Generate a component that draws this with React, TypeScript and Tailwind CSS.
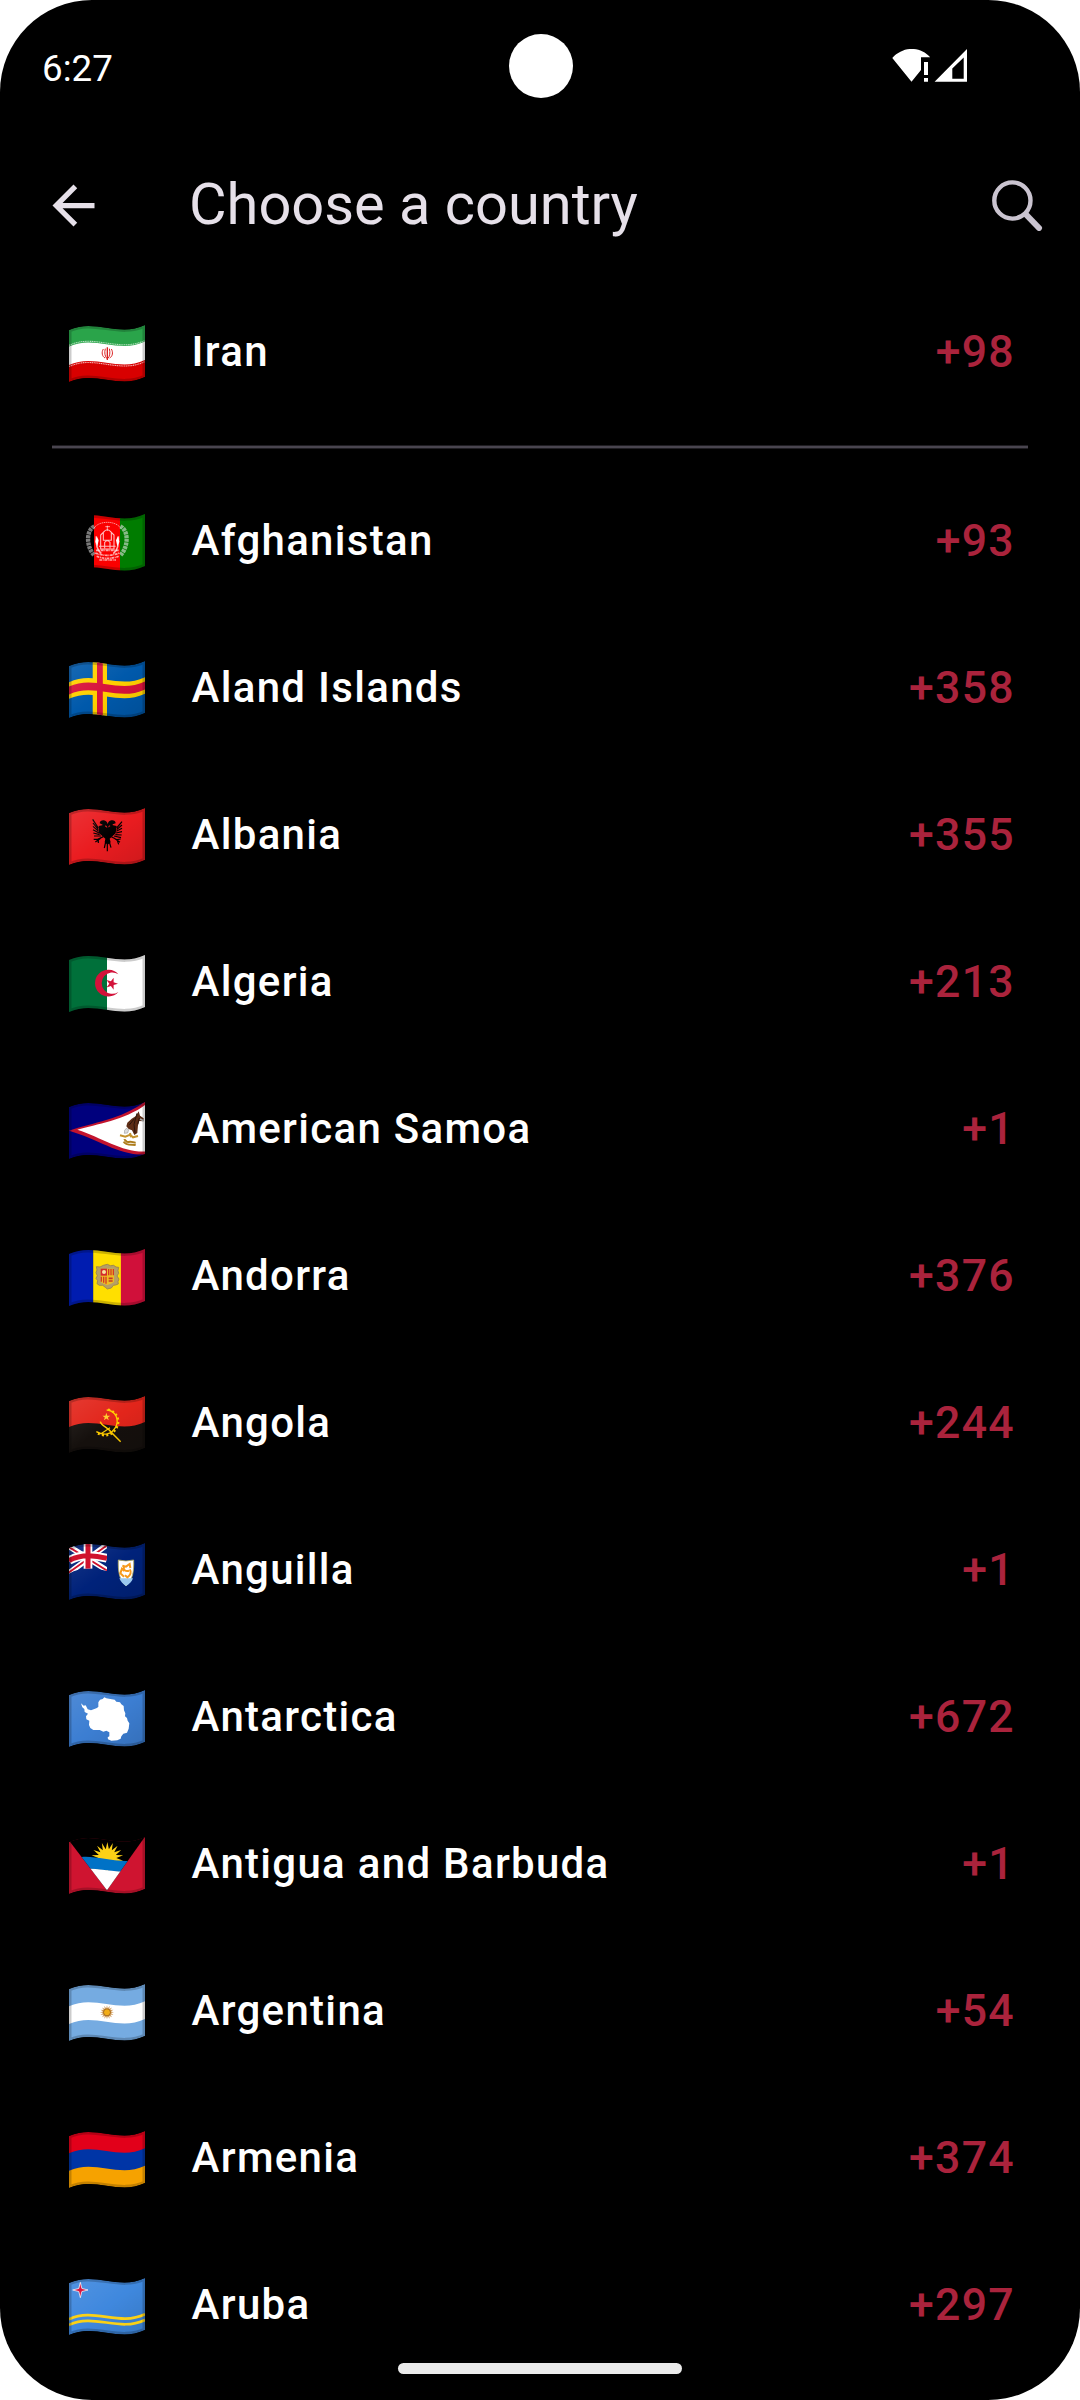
import type { ReactNode } from "react";

/* ---------- flag geometry: 76 x 57 waving cloth ---------- */

const band = (a: number, b: number) =>
  `M0 ${5 + a}C25 ${-7 + a} 50 ${12.5 + a} 76 ${a}V${b}C50 ${12.5 + b} 25 ${-7 + b} 0 ${5 + b}Z`;
const wave = (a: number) => `M0 ${5 + a}C25 ${-7 + a} 50 ${12.5 + a} 76 ${a}`;
const CLOTH = band(0, 52);

function star(cx: number, cy: number, r: number, inner: number, points = 5, turn = -90) {
  return Array.from({ length: points * 2 }, (_, i) => {
    const a = ((turn + (i * 180) / points) * Math.PI) / 180;
    const d = i % 2 ? inner : r;
    return `${(cx + d * Math.cos(a)).toFixed(2)},${(cy + d * Math.sin(a)).toFixed(2)}`;
  }).join(" ");
}

/* Places fine details drawn on a three times larger grid. */
function Fine({ y, children }: { y: number; children: ReactNode }) {
  return <g transform={`scale(.33333) translate(-57 ${-y})`}>{children}</g>;
}

/* `emblem` is painted above the sheen so that white parts stay white. */
function Flag({
  id,
  children,
  emblem,
  sheen = true,
}: {
  id: string;
  children: ReactNode;
  emblem?: ReactNode;
  sheen?: boolean;
}) {
  return (
    <svg width="76" height="58" viewBox="0 0 76 58" className="block shrink-0">
      <defs>
        <clipPath id={`c-${id}`}>
          <path d={CLOTH} />
        </clipPath>
        <linearGradient id={`g-${id}`} x1="0" y1="0" x2="1" y2="1">
          <stop offset="0" stopColor="#fff" stopOpacity=".1" />
          <stop offset=".5" stopColor="#fff" stopOpacity="0" />
          <stop offset=".5" stopColor="#000" stopOpacity="0" />
          <stop offset="1" stopColor="#000" stopOpacity=".12" />
        </linearGradient>
      </defs>
      <g clipPath={`url(#c-${id})`}>
        {children}
        {sheen && <path d={CLOTH} fill={`url(#g-${id})`} />}
        {emblem}
        <path d={CLOTH} fill="none" stroke="#000" strokeOpacity=".2" strokeWidth="5" />
      </g>
    </svg>
  );
}

const Iran = (
  <Flag id="ir" sheen={false}>
    <path d={band(0, 18)} fill="#2aa44a" />
    <path d={band(16.6, 36)} fill="#fff" />
    <path d={band(35, 52)} fill="#d80000" />
    <path d={wave(15.4)} fill="none" stroke="#b5e0bf" strokeWidth="1.1" strokeDasharray="1.2 .6" />
    <path d={wave(36.6)} fill="none" stroke="#f3b4b4" strokeWidth="1.1" strokeDasharray="1.2 .6" />
    <Fine y={76}>
      <g fill="none" stroke="#da2020" strokeWidth="3">
        <path d="M172 143V181" strokeWidth="4" />
        <path d="M166 147C163 158 164 170 171 177M178 147C181 158 180 170 173 177" />
        <path d="M160 148C154 158 156 170 165 175M184 148C190 158 188 170 179 175" />
      </g>
    </Fine>
  </Flag>
);

const Afghanistan = (
  <Flag id="af" sheen={false}>
    <rect width="25.3" height="58" fill="#000" />
    <rect x="25" width="26.2" height="58" fill="#fb0000" />
    <rect x="51" width="25" height="58" fill="#007c00" />
    <Fine y={645}>
      <g fill="none" stroke="#fff">
        <path d="M133 682C108 694 108 742 132 768" stroke="#999" strokeWidth="13" strokeDasharray="9 2" strokeOpacity=".8" />
        <path d="M211 682C236 694 236 742 212 768" stroke="#cfdccf" strokeWidth="13" strokeDasharray="9 2" strokeOpacity=".65" />
        <path d="M132 688C145 664 199 664 212 688" strokeWidth="3" strokeDasharray="4 2" strokeOpacity=".6" />
        <path d="M139 712C137 734 142 754 154 764M205 712C207 734 202 754 190 764" strokeWidth="5" strokeOpacity=".7" />
        <path d="M152 750V708L160 700V724H184V700L192 708V750ZM164 748V730Q172 720 180 730V748M160 700Q172 684 184 700M147 742H197" strokeWidth="3.2" strokeOpacity=".75" />
        <path d="M166 683H180M172 680V696" strokeWidth="3" strokeOpacity=".6" />
        <path d="M136 762Q172 776 208 762M140 772Q172 784 206 772M138 754H206M148 783H198" strokeWidth="5" strokeOpacity=".65" strokeDasharray="8 2 3 2" />
      </g>
      <path d="M140 712L146 724L142 742L136 728ZM204 712L198 724L202 742L208 728Z" fill="#fff" />
    </Fine>
  </Flag>
);

const Aland = (
  <Flag id="ax">
    <path d={CLOTH} fill="#0059ab" />
    <path d={band(16.2, 32.8)} fill="#ffd000" />
    <rect x="23.7" width="14.3" height="58" fill="#ffd000" />
    <path d={band(20.6, 28.4)} fill="#d8133c" />
    <rect x="28" width="5.8" height="58" fill="#d8133c" />
  </Flag>
);

const Albania = (
  <Flag id="al">
    <path d={CLOTH} fill="#ea1c20" />
    <Fine y={506}>
      <path d="M172 566C171 560 168 557 165 560C161 562 157 562 158 556L149 552C149 545 156 542 162 543C170 545 173 551 173 555C174 549 178 544 184 543C190 541 197 545 197 552L188 555C189 561 185 563 181 560C177 557 175 560 175 566Z" />
      <path d="M146 560L160 557L172 566L186 557L200 560L197 582L188 590L179 598L182 609L173 616L164 609L166 598L157 590L147 582Z" />
      <path
        d="M145 566L128 540M145 571L129 551M146 576L129 561M147 581L129 571M149 586L130 581M153 590L132 590M200 566L216 547M200 571L216 557M199 576L216 567M198 581L216 577M196 586L215 587M192 590L213 595"
        stroke="#000"
        strokeWidth="3.6"
      />
      <path
        d="M160 592L143 600L131 600M152 597L136 608M145 600L145 611M184 592L201 601L212 599M193 597L210 609M201 601L206 615M172 604V636M167 608L163 626M178 608L183 625"
        stroke="#000"
        strokeWidth="3.6"
        fill="none"
      />
    </Fine>
  </Flag>
);

const Algeria = (
  <Flag id="dz" sheen={false}>
    <rect width="38" height="58" fill="#00703a" />
    <rect x="38" width="38" height="58" fill="#fff" />
    <Fine y={77}>
      <path d="M205 135A40 40 0 1 0 205 188A32 32 0 1 1 205 135Z" fill="#d3123a" />
      <polygon points={star(185, 163, 19, 7.3, 5, 0)} fill="#d3123a" />
    </Fine>
  </Flag>
);

const AmericanSamoa = (
  <Flag id="as" sheen={false}>
    <path d={CLOTH} fill="#00007d" />
    <Fine y={519}>
      <path d="M57 605C130 580 220 570 290 514V676C210 682 150 632 57 605Z" fill="#c3142e" />
      <path d="M82 602C140 585 230 572 290 524V667C220 672 160 628 82 602Z" fill="#fff" />
      <path d="M266 547L270 560L281 568L280 577L268 576L264 589L262 612L253 618L246 604L236 600L229 592L232 581L245 569L258 561Z" fill="#5c2c15" />
      <path d="M261 553L252 586L255 611M253 569L238 588M268 567L263 586" stroke="#2b140b" strokeWidth="3" fill="none" />
      <path d="M229 598L236 602L233 612L223 613L224 604Z" fill="#ddd" stroke="#888" strokeWidth="1.5" />
      <path d="M270 570L281 575" stroke="#aaa" strokeWidth="5" />
      <path d="M210 619L226 623L241 617L249 625L264 621M240 612L243 625" stroke="#c4922c" strokeWidth="6" fill="none" />
      <path d="M222 634C227 630 228 641 236 639C245 636 252 642 257 640M221 638C227 651 246 646 257 648" stroke="#ad7c1c" strokeWidth="6" fill="none" />
    </Fine>
  </Flag>
);

const Andorra = (
  <Flag id="ad" sheen={false}>
    <rect width="24.3" height="58" fill="#001cb0" />
    <rect x="24.2" width="27.8" height="58" fill="#ffdf00" />
    <rect x="51.9" width="25" height="58" fill="#d0103a" />
    <Fine y={59}>
      <path
        d="M172 105L181 109L191 108L198 113L206 114L204 124L206 132L201 140L207 149L204 157L205 164L197 167L190 168L184 176L172 179L166 174L158 168L148 168L141 163L143 154L138 147L142 139L138 130L141 122L139 112L150 113L160 108Z"
        fill="#b6a065"
        stroke="#98814d"
        strokeWidth="2.5"
      />
      <path d="M152 118H192V158Q184 164 172 167Q160 164 152 158Z" fill="#eebd23" />
      <rect x="152" y="118" width="19" height="21" fill="#d52b2b" />
      <circle cx="162" cy="128" r="6" fill="#f8e2a0" />
      <path d="M176 119V138M183 119V138M190 119V138M154 142V157M161 142V160M168 142V163" stroke="#d43a25" strokeWidth="4" />
      <path d="M176 147H188M176 155H188" stroke="#c73622" strokeWidth="5" />
    </Fine>
  </Flag>
);

const Angola = (
  <Flag id="ao">
    <path d={band(0, 27)} fill="#e2251b" />
    <path d={band(26, 52)} fill="#15100d" />
    <Fine y={499}>
      <path d="M170 541C198 543 209 571 196 594C184 615 162 619 139 606" fill="none" stroke="#fc0" strokeWidth="4" />
      <path d="M174 540C202 545 212 574 199 596C186 620 162 622 139 609" fill="none" stroke="#fc0" strokeWidth="7" strokeDasharray="6 7" />
      <path d="M151 576C153 589 173 592 183 607L212 636" fill="none" stroke="#fc0" strokeWidth="4.5" />
      <path d="M153 612L180 594" stroke="#fc0" strokeWidth="3.5" />
      <polygon points={star(169, 562, 12.5, 4.8)} fill="#ffcd2e" />
    </Fine>
  </Flag>
);

const Anguilla = (
  <Flag
    id="ai"
    emblem={
      <Fine y={71}>
        <clipPath id="jack">
          <path d="M57 87C90 67 130 69 171 79V155C130 144 90 143 57 163Z" />
        </clipPath>
        <g clipPath="url(#jack)" fill="none">
          <path d="M55 80L173 154M50 166L173 75" stroke="#fff" strokeWidth="17" />
          <path d="M55 82L114 118L173 155M50 164L173 77" stroke="#d0122d" strokeWidth="5.5" />
          <path d="M57 124C90 104 130 106 171 117M114 60V165" stroke="#fff" strokeWidth="26" />
          <path d="M57 124C90 104 130 106 171 117M114 60V165" stroke="#d0122d" strokeWidth="15" />
        </g>
        <path d="M205 122Q228 128 251 122C252 155 249 181 228 200C207 181 204 155 205 122Z" fill="#fff" stroke="#b5ad62" strokeWidth="2.5" />
        <path d="M208 177H249C245 188 238 194 228 200C218 194 212 187 208 177Z" fill="#9bc9ef" />
        <path d="M217 139L228 142L239 134L241 146M239 150C246 158 241 168 232 174L225 168M222 172L211 162L216 148L223 155M222 143C219 151 226 157 237 154" fill="none" stroke="#f79a1c" strokeWidth="6" />
      </Fine>
    }
  >
    <path d={CLOTH} fill="#00227a" />
  </Flag>
);

const Antarctica = (
  <Flag
    id="aq"
    emblem={
      <Fine y={512}>
        <path
          d="M93 552L101 559L107 558L113 570L123 573L139 567L145 563L145 549L150 541L158 539L163 534L169 537L181 539L194 541L199 547L210 549L214 555L221 560L222 573L226 582L225 591L231 596L233 604L238 612L236 628L231 640L220 643L214 651L212 658L202 663L184 664L174 660L173 654L178 651L178 639L169 634L160 637L149 632L130 632L121 626L117 617L118 604L109 600L108 591L114 583L104 578L103 569L97 564Z"
          fill="#fff"
        />
      </Fine>
    }
  >
    <path d={CLOTH} fill="#3c7ed2" />
  </Flag>
);

const Antigua = (
  <Flag id="ag" sheen={false}>
    <path d={CLOTH} fill="#cf1430" />
    <Fine y={54}>
      <clipPath id="vee">
        <path d="M55 62L171 214L287 50V30H55Z" />
      </clipPath>
      <g clipPath="url(#vee)">
        <rect x="55" y="30" width="235" height="190" fill="#000" />
        <polygon points={star(172, 117, 48, 27, 18)} fill="#fcd116" />
        <path d="M95 114C140 110 190 131 250 125V155C200 165 170 151 95 148Z" fill="#0072c6" />
        <path d="M95 149C145 145 190 163 250 156V220H95Z" fill="#fff" />
      </g>
    </Fine>
  </Flag>
);

const Argentina = (
  <Flag id="ar" sheen={false}>
    <path d={CLOTH} fill="#75abe1" />
    <path d={band(17.3, 35)} fill="#fff" />
    <Fine y={493}>
      <polygon points={star(171, 578, 21, 12, 16)} fill="#c98a3c" fillOpacity=".85" />
      <circle cx="171" cy="578" r="10.5" fill="#f3ad16" stroke="#98601f" strokeWidth="2.5" />
    </Fine>
  </Flag>
);

const Armenia = (
  <Flag id="am" sheen={false}>
    <path d={band(0, 18)} fill="#e2001a" />
    <path d={band(17.3, 36)} fill="#0035a6" />
    <path d={band(34.8, 52)} fill="#f6a200" />
  </Flag>
);

const Aruba = (
  <Flag
    id="aw"
    emblem={
      <>
        <path d={wave(36.3)} fill="none" stroke="#fbd116" strokeWidth="2.7" />
        <path d={wave(41.9)} fill="none" stroke="#fbd116" strokeWidth="2.7" />
        <Fine y={506}>
          <polygon points={star(91, 542, 23, 6.5, 4)} fill="#dc1440" stroke="#fff" strokeWidth="2.2" />
        </Fine>
      </>
    }
  >
    <path d={CLOTH} fill="#3f88de" />
  </Flag>
);

const COUNTRIES: { name: string; code: string; flag: ReactNode }[] = [
  { name: "Afghanistan", code: "+93", flag: Afghanistan },
  { name: "Aland Islands", code: "+358", flag: Aland },
  { name: "Albania", code: "+355", flag: Albania },
  { name: "Algeria", code: "+213", flag: Algeria },
  { name: "American Samoa", code: "+1", flag: AmericanSamoa },
  { name: "Andorra", code: "+376", flag: Andorra },
  { name: "Angola", code: "+244", flag: Angola },
  { name: "Anguilla", code: "+1", flag: Anguilla },
  { name: "Antarctica", code: "+672", flag: Antarctica },
  { name: "Antigua and Barbuda", code: "+1", flag: Antigua },
  { name: "Argentina", code: "+54", flag: Argentina },
  { name: "Armenia", code: "+374", flag: Armenia },
  { name: "Aruba", code: "+297", flag: Aruba },
];

function Row({ name, code, flag }: { name: string; code: string; flag: ReactNode }) {
  return (
    <li className="flex h-[147px] shrink-0 items-center pr-[65px] pl-[69px]">
      {flag}
      <span className="mb-[3px] ml-[46.6px] flex-1 text-[42px] leading-[48px] font-medium tracking-[1.3px] whitespace-nowrap text-white">
        {name}
      </span>
      <span className="mb-[3px] text-[44.6px] leading-[48px] font-medium tracking-[1.3px] text-[#aa233c]">{code}</span>
    </li>
  );
}

function StatusBar() {
  return (
    <div className="relative flex h-[135px] shrink-0 items-start justify-between pr-[113px] pl-[42px]">
      <span className="mt-[47px] text-[36.75px] leading-[44px] text-white">6:27</span>
      <div className="absolute top-[33.5px] left-[508.5px] size-[64px] rounded-full bg-white" />
      <svg width="75" height="33" viewBox="892 49 75 33" className="mt-[49px]" fill="#fff">
        <path d="M911.5 81.7L892.3 58C903 46 920 46 930.2 57.3H921V70Z" />
        <path d="M924 62h4v13h-4zM924 78h4v3.7h-4z" />
        <path fillRule="evenodd" d="M934.6 81.7L967 49V81.7ZM952.3 78.7H963.7V57.5L952.3 68.5Z" />
      </svg>
    </div>
  );
}

function Header() {
  return (
    <header className="flex h-[145px] shrink-0 items-center pr-[37px] pb-[5px] pl-[42px]">
      <svg width="63" height="63" viewBox="0 0 24 24" fill="#e6e0e9">
        <path d="M20 11H7.83l5.59-5.59L12 4l-8 8 8 8 1.41-1.41L7.83 13H20v-2z" />
      </svg>
      <h1 className="mb-[2px] ml-[84px] flex-1 text-[57.75px] leading-[68px] font-normal text-[#e6e0e9]">
        Choose a country
      </h1>
      <svg width="52" height="52" viewBox="991 179 52 52" fill="none" stroke="#cac4d0">
        <circle cx="1012.4" cy="200.5" r="18.1" strokeWidth="4.4" />
        <path d="M1026 214.5L1039 228" strokeWidth="6" strokeLinecap="round" />
      </svg>
    </header>
  );
}

export default function App() {
  return (
    <div className="h-[2400px] w-[1080px] bg-white font-[Roboto,sans-serif]">
      <main className="relative flex h-full w-full flex-col overflow-hidden rounded-[92px] bg-black">
        <StatusBar />
        <Header />
        <ul className="flex flex-col">
          <Row name="Iran" code="+98" flag={Iran} />
          <li className="flex h-[42px] shrink-0 items-center px-[52px]">
            <div className="mb-[2px] h-[4px] w-full border-y border-[#1f1d22] bg-[#49454f]" />
          </li>
          {COUNTRIES.map((c) => (
            <Row key={c.name} {...c} />
          ))}
        </ul>
        <div className="absolute top-[2363px] left-[398px] h-[11px] w-[284px] rounded-full bg-[#ebebeb]" />
      </main>
    </div>
  );
}
